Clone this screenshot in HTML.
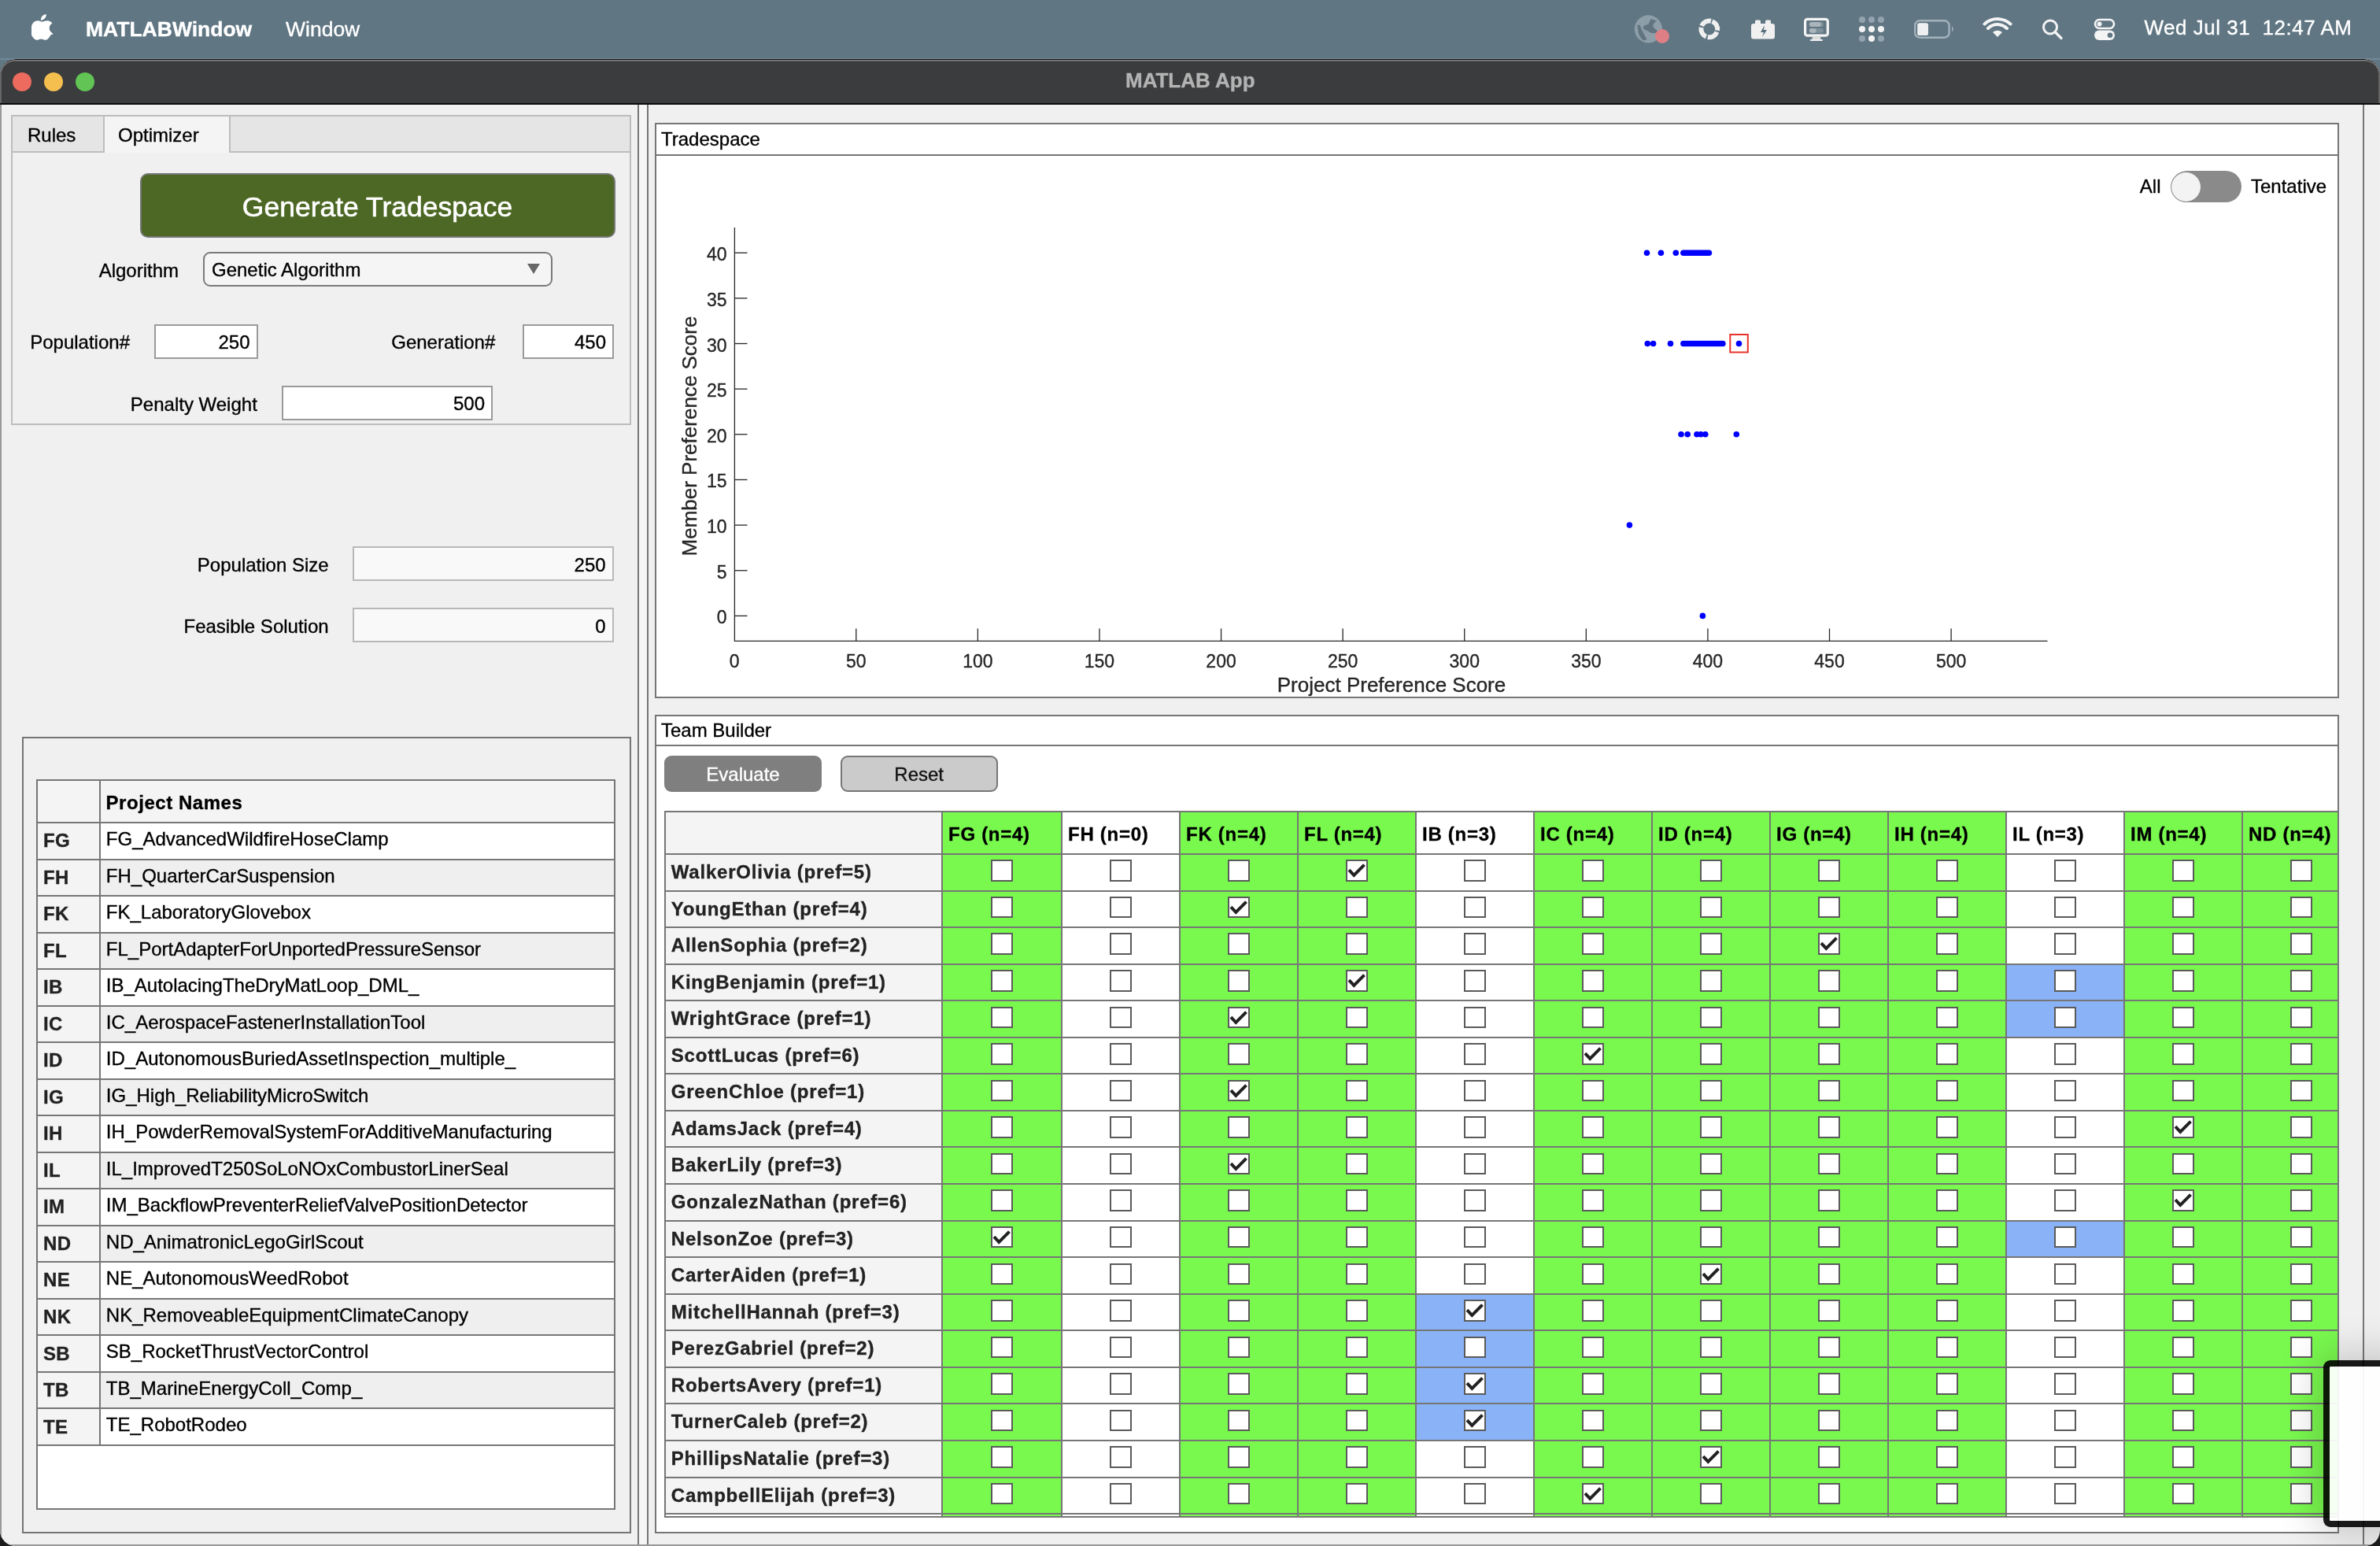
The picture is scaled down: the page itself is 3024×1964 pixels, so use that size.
<!DOCTYPE html>
<html><head><meta charset="utf-8"><title>MATLAB App</title>
<style>
html,body{margin:0;padding:0;}
body{width:3024px;height:1964px;position:relative;overflow:hidden;background:#1c1c1c;font-family:"Liberation Sans", sans-serif;}
#root{position:absolute;left:0;top:0;width:3024px;height:1964px;will-change:transform;}
div{box-sizing:border-box;-webkit-text-stroke:0.35px currentColor;}
</style></head><body>
<div id="root">

<div style="position:absolute;left:0px;top:0px;width:3024px;height:140px;background:#607683;"></div>
<div style="position:absolute;left:0px;top:73.5px;width:3024px;height:2.0px;background:#718998;"></div>
<svg style="position:absolute;left:40px;top:18px" width="28" height="33" viewBox="0 0 170 200">
<path fill="#fff" d="M150.4 155.6c-3 6.9-6.5 13.3-10.6 19.1-5.6 8-10.2 13.5-13.7 16.6-5.5 5-11.4 7.6-17.7 7.8-4.5 0-10-1.3-16.3-3.9-6.4-2.6-12.2-3.9-17.6-3.9-5.6 0-11.7 1.3-18.2 3.9-6.5 2.6-11.8 4-15.7 4.1-6.1.3-12.1-2.4-18.1-8-3.8-3.3-8.6-9-14.3-17-6.1-8.6-11.2-18.6-15.1-29.9C.9 132.3-1.2 120.4-1.2 108.9c0-13.2 2.9-24.6 8.6-34.1 4.5-7.7 10.5-13.8 18-18.2 7.5-4.5 15.6-6.8 24.4-6.9 4.8 0 11 1.5 18.8 4.4 7.8 2.9 12.8 4.4 14.9 4.4 1.6 0 7.2-1.7 16.6-5.2 8.9-3.2 16.5-4.5 22.6-4 16.7 1.3 29.3 7.9 37.7 19.8-15 9.1-22.4 21.8-22.2 38.1.1 12.7 4.7 23.3 13.8 31.7 4.1 3.9 8.7 6.9 13.8 9.1-1.1 3.2-2.3 6.3-3.5 9.3zM113.9 4c0 9.9-3.6 19.2-10.9 27.8-8.7 10.2-19.3 16.1-30.7 15.2-.1-1.2-.2-2.5-.2-3.8 0-9.5 4.1-19.7 11.5-28 3.7-4.2 8.4-7.7 14-10.6C103.2 1.7 108.5.2 113.5-.1c.1 1.4.2 2.7.2 4.1z"/></svg>
<div style="position:absolute;left:109px;top:21.72px;font-size:26.5px;line-height:30.45px;font-weight:700;color:#fff;white-space:pre;">MATLABWindow</div>
<div style="position:absolute;left:363px;top:21.72px;font-size:26.5px;line-height:30.45px;font-weight:400;color:#fff;white-space:pre;">Window</div>
<div style="position:absolute;left:2724.5px;top:21.27px;font-size:26px;line-height:29.87px;font-weight:400;color:#fff;white-space:pre;letter-spacing:0.5px;">Wed Jul 31  12:47 AM</div>
<svg style="position:absolute;left:2070px;top:15px" width="460" height="45" viewBox="2070 15 460 45">
<g>
 <circle cx="2094.4" cy="36.9" r="17.6" fill="#8d9ea8"/>
 <path d="M2080.5 31.6 L2083.9 32.1 Q2085 37 2088.1 41.7 Q2090 46 2092.7 50.1 L2088.1 51.4 Q2083 47 2081.8 41.7 Q2080.5 36 2080.5 31.6 Z" fill="#617581"/>
 <path d="M2097.7 24.1 L2105.3 26.6 Q2101 29 2100.3 32.5 Q2100 34.5 2101.9 35.8 L2106.1 39.2 L2104.5 41.7 Q2100 42.5 2097.7 41.7 Q2094 39 2091.8 38.4 Q2089 37.5 2087.6 35.8 Q2088 33 2089.3 32.5 Q2092 31.5 2094.4 30.8 Q2096 27 2097.7 24.1 Z" fill="#617581"/>
 <circle cx="2112" cy="46" r="9" fill="#de7f85"/>
 <circle cx="2171.8" cy="36.9" r="10.4" fill="none" stroke="#efefef" stroke-width="6" stroke-dasharray="14.23 2.1" transform="rotate(-69 2171.8 36.9)"/>
 <rect x="2225" y="30" width="30" height="19.5" rx="3" fill="#f0f0f0"/>
 <rect x="2230" y="25.5" width="7" height="6" rx="1.5" fill="#f0f0f0"/>
 <rect x="2243" y="25.5" width="7" height="6" rx="1.5" fill="#f0f0f0"/>
 <path d="M2242 32 l-5 9 h4 l-2 6 l6 -9 h-4 z" fill="#5b6f7c"/>
 <rect x="2293.6" y="24.4" width="28.7" height="20.8" rx="2.8" fill="none" stroke="#f4f4f4" stroke-width="3.2"/>
 <rect x="2298.9" y="28" width="18.1" height="5.9" rx="2.95" fill="#7f919b"/>
 <rect x="2298.9" y="28" width="14.8" height="5.9" rx="2.95" fill="#aab5bb"/>
 <rect x="2298.9" y="36" width="18.1" height="5.7" rx="2.85" fill="#7f919b"/>
 <rect x="2298.9" y="36" width="8.8" height="5.7" rx="2.85" fill="#aab5bb"/>
 <rect x="2302.6" y="46.8" width="10.7" height="3.5" fill="#dcdcdc"/>
 <rect x="2299.9" y="50" width="16.1" height="2" rx="0.8" fill="#f0f0f0"/>
 <circle cx="2366" cy="25" r="4" fill="#93a3ad"/><circle cx="2378" cy="25" r="4" fill="#93a3ad"/><circle cx="2390" cy="25" r="4" fill="#93a3ad"/>
 <circle cx="2366" cy="37" r="4" fill="#f4f4f4"/><circle cx="2378" cy="37" r="4" fill="#f4f4f4"/><circle cx="2390" cy="37" r="4" fill="#f4f4f4"/>
 <circle cx="2366" cy="49" r="4" fill="#93a3ad"/><circle cx="2378" cy="49" r="4" fill="#f4f4f4"/><circle cx="2390" cy="49" r="4" fill="#93a3ad"/>
 <rect x="2433.2" y="26.3" width="43.4" height="21.4" rx="6" fill="none" stroke="#a3b2bb" stroke-width="2.4"/>
 <rect x="2436.2" y="29.2" width="13.8" height="15.8" rx="2.6" fill="#eeeff0"/>
 <path d="M2480 33 q3.5 3.9 0 7.8 z" fill="#a3b2bb"/>
</g>
<g fill="none" stroke="#f4f4f4" stroke-linecap="round">
</g>
</svg>
<svg style="position:absolute;left:2515px;top:18px" width="180" height="40" viewBox="2515 18 180 40">
 <path d="M2538 47 l-6 -6 a9 9 0 0 1 12 0 z" fill="#f4f4f4"/>
 <path d="M2526 36 a17 17 0 0 1 24 0" fill="none" stroke="#f4f4f4" stroke-width="4" stroke-linecap="round"/>
 <path d="M2521.5 30.5 a24.5 24.5 0 0 1 33 0" fill="none" stroke="#f4f4f4" stroke-width="4" stroke-linecap="round"/>
 <circle cx="2605" cy="34.5" r="8.5" fill="none" stroke="#f4f4f4" stroke-width="3"/>
 <path d="M2611 40.5 l8 8" stroke="#f4f4f4" stroke-width="3.2" stroke-linecap="round"/>
 <rect x="2662" y="25" width="24" height="11" rx="5.5" fill="none" stroke="#f4f4f4" stroke-width="2.6"/>
 <circle cx="2667.5" cy="30.5" r="3" fill="#f4f4f4"/>
 <rect x="2661" y="38.5" width="26" height="12.5" rx="6.25" fill="#f4f4f4"/>
 <circle cx="2681" cy="44.75" r="3.3" fill="#607683"/>
</svg>
<div style="position:absolute;left:0;top:0;width:3024px;height:1964px;clip-path:inset(75px 0 0 0 round 20px);">
<div style="position:absolute;left:0px;top:75px;width:3024px;height:1889px;background:#f0f0f0;"></div>
<div style="position:absolute;left:0;top:75px;width:3024px;height:58px;background:#3b3c3e;border-radius:20px 20px 0 0;border-top:1.2px solid #0d0d0d;box-shadow:inset 0 1.6px 0 #858585, inset 1.8px 0 0 #6a6a6a, inset -1.8px 0 0 #6a6a6a;"></div>
<div style="position:absolute;left:0px;top:131px;width:3024px;height:2px;background:#0a0a0a;"></div>
<div style="position:absolute;left:0px;top:1962px;width:3024px;height:2px;background:#999;"></div>
<div style="position:absolute;left:16px;top:92px;width:24px;height:24px;border-radius:50%;background:#ec6a5e;"></div>
<div style="position:absolute;left:56px;top:92px;width:24px;height:24px;border-radius:50%;background:#f4bf4f;"></div>
<div style="position:absolute;left:96px;top:92px;width:24px;height:24px;border-radius:50%;background:#61c454;"></div>
<div style="position:absolute;left:512.3px;width:2000px;text-align:center;top:88.47px;font-size:26px;line-height:29.87px;font-weight:700;color:#b3b3b3;white-space:pre;">MATLAB App</div>
<div style="position:absolute;left:0px;top:133px;width:2px;height:1829px;background:#999;"></div>
<div style="position:absolute;left:810px;top:133px;width:2px;height:1829px;background:#767676;"></div>
<div style="position:absolute;left:812px;top:133px;width:10px;height:1829px;background:#f6f6f6;"></div>
<div style="position:absolute;left:822px;top:133px;width:2px;height:1829px;background:#767676;"></div>
<div style="position:absolute;left:3002px;top:133px;width:2px;height:1829px;background:#767676;"></div>
<div style="position:absolute;left:3004px;top:133px;width:18px;height:1829px;background:#efefef;"></div>
<div style="position:absolute;left:14px;top:146px;width:788px;height:394px;border:2px solid #bdbdbd;background:#f0f0f0;"></div>
<div style="position:absolute;left:16px;top:148px;width:784px;height:46px;background:#e5e5e5;border-bottom:2px solid #bdbdbd;"></div>
<div style="position:absolute;left:16px;top:148px;width:117px;height:46px;background:#e5e5e5;border-right:2px solid #bdbdbd;border-bottom:2px solid #bdbdbd;"></div>
<div style="position:absolute;left:133px;top:148px;width:160px;height:46px;background:#f4f4f4;border-right:2px solid #bdbdbd;"></div>
<div style="position:absolute;left:35px;top:157.78px;font-size:24px;line-height:27.58px;font-weight:400;color:#000;white-space:pre;">Rules</div>
<div style="position:absolute;left:150px;top:157.78px;font-size:24px;line-height:27.58px;font-weight:400;color:#000;white-space:pre;">Optimizer</div>
<div style="position:absolute;left:178px;top:220px;width:604px;height:82px;background:#4d6824;border:2px solid #767676;border-radius:10px;"></div>
<div style="position:absolute;left:-520.5px;width:2000px;text-align:center;top:243.37px;font-size:35.5px;line-height:40.79px;font-weight:400;color:#fff;white-space:pre;-webkit-text-stroke:0.6px #fff;">Generate Tradespace</div>
<div style="position:absolute;right:2797px;text-align:right;top:329.68px;font-size:24px;line-height:27.58px;font-weight:400;color:#000;white-space:pre;">Algorithm</div>
<div style="position:absolute;left:258px;top:320px;width:444px;height:44px;background:#f5f5f5;border:2px solid #7a7a7a;border-radius:9px;"></div>
<div style="position:absolute;left:269px;top:328.68px;font-size:24px;line-height:27.58px;font-weight:400;color:#000;white-space:pre;">Genetic Algorithm</div>
<svg style="position:absolute;left:668px;top:333px" width="20" height="17"><path d="M2 2 H18 L10 15 Z" fill="#666"/></svg>
<div style="position:absolute;right:2859px;text-align:right;top:421.48px;font-size:24px;line-height:27.58px;font-weight:400;color:#000;white-space:pre;">Population#</div>
<div style="position:absolute;left:196px;top:412px;width:132px;height:44px;background:#fff;border:2px solid #9a9a9a;"></div>
<div style="position:absolute;right:2706.5px;text-align:right;top:421.08px;font-size:24px;line-height:27.58px;font-weight:400;color:#000;white-space:pre;">250</div>
<div style="position:absolute;right:2394.7px;text-align:right;top:421.48px;font-size:24px;line-height:27.58px;font-weight:400;color:#000;white-space:pre;">Generation#</div>
<div style="position:absolute;left:664px;top:412px;width:116px;height:44px;background:#fff;border:2px solid #9a9a9a;"></div>
<div style="position:absolute;right:2254px;text-align:right;top:420.78px;font-size:24px;line-height:27.58px;font-weight:400;color:#000;white-space:pre;">450</div>
<div style="position:absolute;right:2697.2px;text-align:right;top:500.08px;font-size:24px;line-height:27.58px;font-weight:400;color:#000;white-space:pre;">Penalty Weight</div>
<div style="position:absolute;left:358px;top:490px;width:268px;height:44px;background:#fff;border:2px solid #9a9a9a;"></div>
<div style="position:absolute;right:2408px;text-align:right;top:498.88px;font-size:24px;line-height:27.58px;font-weight:400;color:#000;white-space:pre;">500</div>
<div style="position:absolute;right:2606.4px;text-align:right;top:703.68px;font-size:24px;line-height:27.58px;font-weight:400;color:#000;white-space:pre;">Population Size</div>
<div style="position:absolute;left:448px;top:694px;width:332px;height:44px;background:#f9f9f9;border:2px solid #b8b8b8;"></div>
<div style="position:absolute;right:2254.4px;text-align:right;top:703.88px;font-size:24px;line-height:27.58px;font-weight:400;color:#000;white-space:pre;">250</div>
<div style="position:absolute;right:2606.4px;text-align:right;top:781.58px;font-size:24px;line-height:27.58px;font-weight:400;color:#000;white-space:pre;">Feasible Solution</div>
<div style="position:absolute;left:448px;top:772px;width:332px;height:44px;background:#f9f9f9;border:2px solid #b8b8b8;"></div>
<div style="position:absolute;right:2254.4px;text-align:right;top:782.08px;font-size:24px;line-height:27.58px;font-weight:400;color:#000;white-space:pre;">0</div>
<div style="position:absolute;left:28px;top:936px;width:774px;height:1012px;border:2px solid #747474;background:#f0f0f0;"></div>
<div style="position:absolute;left:46px;top:990px;width:736px;height:928px;border:2px solid #767676;background:#fff;"></div>
<div style="position:absolute;left:48px;top:992px;width:732px;height:53px;background:#f4f4f4;"></div>
<div style="position:absolute;left:48px;top:1044px;width:732px;height:2px;background:#767676;"></div>
<div style="position:absolute;left:134.5px;top:1006.28px;font-size:24px;line-height:27.58px;font-weight:700;color:#000;white-space:pre;letter-spacing:0.55px;">Project Names</div>
<div style="position:absolute;left:48px;top:1046.0px;width:732px;height:44.52999999999997px;background:#ffffff;"></div>
<div style="position:absolute;left:48px;top:1046.0px;width:78px;height:44.52999999999997px;background:#f4f4f4;"></div>
<div style="position:absolute;left:48px;top:1090.53px;width:732px;height:2.0px;background:#767676;"></div>
<div style="position:absolute;left:55px;top:1054.08px;font-size:24px;line-height:27.58px;font-weight:700;color:#222;white-space:pre;letter-spacing:0.3px;">FG</div>
<div style="position:absolute;left:134.8px;top:1051.98px;font-size:24px;line-height:27.58px;font-weight:400;color:#000;white-space:pre;">FG_AdvancedWildfireHoseClamp</div>
<div style="position:absolute;left:48px;top:1092.53px;width:732px;height:44.52999999999997px;background:#efefef;"></div>
<div style="position:absolute;left:48px;top:1092.53px;width:78px;height:44.52999999999997px;background:#f4f4f4;"></div>
<div style="position:absolute;left:48px;top:1137.06px;width:732px;height:2.0px;background:#767676;"></div>
<div style="position:absolute;left:55px;top:1100.61px;font-size:24px;line-height:27.58px;font-weight:700;color:#222;white-space:pre;letter-spacing:0.3px;">FH</div>
<div style="position:absolute;left:134.8px;top:1098.51px;font-size:24px;line-height:27.58px;font-weight:400;color:#000;white-space:pre;">FH_QuarterCarSuspension</div>
<div style="position:absolute;left:48px;top:1139.06px;width:732px;height:44.52999999999997px;background:#ffffff;"></div>
<div style="position:absolute;left:48px;top:1139.06px;width:78px;height:44.52999999999997px;background:#f4f4f4;"></div>
<div style="position:absolute;left:48px;top:1183.59px;width:732px;height:2.0px;background:#767676;"></div>
<div style="position:absolute;left:55px;top:1147.14px;font-size:24px;line-height:27.58px;font-weight:700;color:#222;white-space:pre;letter-spacing:0.3px;">FK</div>
<div style="position:absolute;left:134.8px;top:1145.04px;font-size:24px;line-height:27.58px;font-weight:400;color:#000;white-space:pre;">FK_LaboratoryGlovebox</div>
<div style="position:absolute;left:48px;top:1185.59px;width:732px;height:44.52999999999997px;background:#efefef;"></div>
<div style="position:absolute;left:48px;top:1185.59px;width:78px;height:44.52999999999997px;background:#f4f4f4;"></div>
<div style="position:absolute;left:48px;top:1230.12px;width:732px;height:2.0px;background:#767676;"></div>
<div style="position:absolute;left:55px;top:1193.67px;font-size:24px;line-height:27.58px;font-weight:700;color:#222;white-space:pre;letter-spacing:0.3px;">FL</div>
<div style="position:absolute;left:134.8px;top:1191.57px;font-size:24px;line-height:27.58px;font-weight:400;color:#000;white-space:pre;">FL_PortAdapterForUnportedPressureSensor</div>
<div style="position:absolute;left:48px;top:1232.12px;width:732px;height:44.52999999999997px;background:#ffffff;"></div>
<div style="position:absolute;left:48px;top:1232.12px;width:78px;height:44.52999999999997px;background:#f4f4f4;"></div>
<div style="position:absolute;left:48px;top:1276.6499999999999px;width:732px;height:2.0px;background:#767676;"></div>
<div style="position:absolute;left:55px;top:1240.20px;font-size:24px;line-height:27.58px;font-weight:700;color:#222;white-space:pre;letter-spacing:0.3px;">IB</div>
<div style="position:absolute;left:134.8px;top:1238.10px;font-size:24px;line-height:27.58px;font-weight:400;color:#000;white-space:pre;">IB_AutolacingTheDryMatLoop_DML_</div>
<div style="position:absolute;left:48px;top:1278.65px;width:732px;height:44.52999999999997px;background:#efefef;"></div>
<div style="position:absolute;left:48px;top:1278.65px;width:78px;height:44.52999999999997px;background:#f4f4f4;"></div>
<div style="position:absolute;left:48px;top:1323.18px;width:732px;height:2.0px;background:#767676;"></div>
<div style="position:absolute;left:55px;top:1286.73px;font-size:24px;line-height:27.58px;font-weight:700;color:#222;white-space:pre;letter-spacing:0.3px;">IC</div>
<div style="position:absolute;left:134.8px;top:1284.63px;font-size:24px;line-height:27.58px;font-weight:400;color:#000;white-space:pre;">IC_AerospaceFastenerInstallationTool</div>
<div style="position:absolute;left:48px;top:1325.18px;width:732px;height:44.52999999999997px;background:#ffffff;"></div>
<div style="position:absolute;left:48px;top:1325.18px;width:78px;height:44.52999999999997px;background:#f4f4f4;"></div>
<div style="position:absolute;left:48px;top:1369.71px;width:732px;height:2.0px;background:#767676;"></div>
<div style="position:absolute;left:55px;top:1333.26px;font-size:24px;line-height:27.58px;font-weight:700;color:#222;white-space:pre;letter-spacing:0.3px;">ID</div>
<div style="position:absolute;left:134.8px;top:1331.16px;font-size:24px;line-height:27.58px;font-weight:400;color:#000;white-space:pre;">ID_AutonomousBuriedAssetInspection_multiple_</div>
<div style="position:absolute;left:48px;top:1371.71px;width:732px;height:44.52999999999997px;background:#efefef;"></div>
<div style="position:absolute;left:48px;top:1371.71px;width:78px;height:44.52999999999997px;background:#f4f4f4;"></div>
<div style="position:absolute;left:48px;top:1416.24px;width:732px;height:2.0px;background:#767676;"></div>
<div style="position:absolute;left:55px;top:1379.79px;font-size:24px;line-height:27.58px;font-weight:700;color:#222;white-space:pre;letter-spacing:0.3px;">IG</div>
<div style="position:absolute;left:134.8px;top:1377.69px;font-size:24px;line-height:27.58px;font-weight:400;color:#000;white-space:pre;">IG_High_ReliabilityMicroSwitch</div>
<div style="position:absolute;left:48px;top:1418.24px;width:732px;height:44.52999999999997px;background:#ffffff;"></div>
<div style="position:absolute;left:48px;top:1418.24px;width:78px;height:44.52999999999997px;background:#f4f4f4;"></div>
<div style="position:absolute;left:48px;top:1462.77px;width:732px;height:2.0px;background:#767676;"></div>
<div style="position:absolute;left:55px;top:1426.32px;font-size:24px;line-height:27.58px;font-weight:700;color:#222;white-space:pre;letter-spacing:0.3px;">IH</div>
<div style="position:absolute;left:134.8px;top:1424.22px;font-size:24px;line-height:27.58px;font-weight:400;color:#000;white-space:pre;">IH_PowderRemovalSystemForAdditiveManufacturing</div>
<div style="position:absolute;left:48px;top:1464.77px;width:732px;height:44.52999999999997px;background:#efefef;"></div>
<div style="position:absolute;left:48px;top:1464.77px;width:78px;height:44.52999999999997px;background:#f4f4f4;"></div>
<div style="position:absolute;left:48px;top:1509.3px;width:732px;height:2.0px;background:#767676;"></div>
<div style="position:absolute;left:55px;top:1472.85px;font-size:24px;line-height:27.58px;font-weight:700;color:#222;white-space:pre;letter-spacing:0.3px;">IL</div>
<div style="position:absolute;left:134.8px;top:1470.75px;font-size:24px;line-height:27.58px;font-weight:400;color:#000;white-space:pre;">IL_ImprovedT250SoLoNOxCombustorLinerSeal</div>
<div style="position:absolute;left:48px;top:1511.3px;width:732px;height:44.52999999999997px;background:#ffffff;"></div>
<div style="position:absolute;left:48px;top:1511.3px;width:78px;height:44.52999999999997px;background:#f4f4f4;"></div>
<div style="position:absolute;left:48px;top:1555.83px;width:732px;height:2.0px;background:#767676;"></div>
<div style="position:absolute;left:55px;top:1519.38px;font-size:24px;line-height:27.58px;font-weight:700;color:#222;white-space:pre;letter-spacing:0.3px;">IM</div>
<div style="position:absolute;left:134.8px;top:1517.28px;font-size:24px;line-height:27.58px;font-weight:400;color:#000;white-space:pre;">IM_BackflowPreventerReliefValvePositionDetector</div>
<div style="position:absolute;left:48px;top:1557.83px;width:732px;height:44.52999999999997px;background:#efefef;"></div>
<div style="position:absolute;left:48px;top:1557.83px;width:78px;height:44.52999999999997px;background:#f4f4f4;"></div>
<div style="position:absolute;left:48px;top:1602.36px;width:732px;height:2.0px;background:#767676;"></div>
<div style="position:absolute;left:55px;top:1565.91px;font-size:24px;line-height:27.58px;font-weight:700;color:#222;white-space:pre;letter-spacing:0.3px;">ND</div>
<div style="position:absolute;left:134.8px;top:1563.81px;font-size:24px;line-height:27.58px;font-weight:400;color:#000;white-space:pre;">ND_AnimatronicLegoGirlScout</div>
<div style="position:absolute;left:48px;top:1604.3600000000001px;width:732px;height:44.52999999999997px;background:#ffffff;"></div>
<div style="position:absolute;left:48px;top:1604.3600000000001px;width:78px;height:44.52999999999997px;background:#f4f4f4;"></div>
<div style="position:absolute;left:48px;top:1648.89px;width:732px;height:2.0px;background:#767676;"></div>
<div style="position:absolute;left:55px;top:1612.44px;font-size:24px;line-height:27.58px;font-weight:700;color:#222;white-space:pre;letter-spacing:0.3px;">NE</div>
<div style="position:absolute;left:134.8px;top:1610.34px;font-size:24px;line-height:27.58px;font-weight:400;color:#000;white-space:pre;">NE_AutonomousWeedRobot</div>
<div style="position:absolute;left:48px;top:1650.8899999999999px;width:732px;height:44.52999999999997px;background:#efefef;"></div>
<div style="position:absolute;left:48px;top:1650.8899999999999px;width:78px;height:44.52999999999997px;background:#f4f4f4;"></div>
<div style="position:absolute;left:48px;top:1695.4199999999998px;width:732px;height:2.0px;background:#767676;"></div>
<div style="position:absolute;left:55px;top:1658.97px;font-size:24px;line-height:27.58px;font-weight:700;color:#222;white-space:pre;letter-spacing:0.3px;">NK</div>
<div style="position:absolute;left:134.8px;top:1656.87px;font-size:24px;line-height:27.58px;font-weight:400;color:#000;white-space:pre;">NK_RemoveableEquipmentClimateCanopy</div>
<div style="position:absolute;left:48px;top:1697.42px;width:732px;height:44.52999999999997px;background:#ffffff;"></div>
<div style="position:absolute;left:48px;top:1697.42px;width:78px;height:44.52999999999997px;background:#f4f4f4;"></div>
<div style="position:absolute;left:48px;top:1741.95px;width:732px;height:2.0px;background:#767676;"></div>
<div style="position:absolute;left:55px;top:1705.50px;font-size:24px;line-height:27.58px;font-weight:700;color:#222;white-space:pre;letter-spacing:0.3px;">SB</div>
<div style="position:absolute;left:134.8px;top:1703.40px;font-size:24px;line-height:27.58px;font-weight:400;color:#000;white-space:pre;">SB_RocketThrustVectorControl</div>
<div style="position:absolute;left:48px;top:1743.95px;width:732px;height:44.52999999999997px;background:#efefef;"></div>
<div style="position:absolute;left:48px;top:1743.95px;width:78px;height:44.52999999999997px;background:#f4f4f4;"></div>
<div style="position:absolute;left:48px;top:1788.48px;width:732px;height:2.0px;background:#767676;"></div>
<div style="position:absolute;left:55px;top:1752.03px;font-size:24px;line-height:27.58px;font-weight:700;color:#222;white-space:pre;letter-spacing:0.3px;">TB</div>
<div style="position:absolute;left:134.8px;top:1749.93px;font-size:24px;line-height:27.58px;font-weight:400;color:#000;white-space:pre;">TB_MarineEnergyColl_Comp_</div>
<div style="position:absolute;left:48px;top:1790.48px;width:732px;height:44.52999999999997px;background:#ffffff;"></div>
<div style="position:absolute;left:48px;top:1790.48px;width:78px;height:44.52999999999997px;background:#f4f4f4;"></div>
<div style="position:absolute;left:48px;top:1835.01px;width:732px;height:2.0px;background:#767676;"></div>
<div style="position:absolute;left:55px;top:1798.56px;font-size:24px;line-height:27.58px;font-weight:700;color:#222;white-space:pre;letter-spacing:0.3px;">TE</div>
<div style="position:absolute;left:134.8px;top:1796.46px;font-size:24px;line-height:27.58px;font-weight:400;color:#000;white-space:pre;">TE_RobotRodeo</div>
<div style="position:absolute;left:126px;top:992px;width:2px;height:844.01px;background:#767676;"></div>
<div style="position:absolute;left:832px;top:156px;width:2140px;height:730.5px;border:2px solid #767676;background:#fff;"></div>
<div style="position:absolute;left:834px;top:196px;width:2136px;height:2px;background:#767676;"></div>
<div style="position:absolute;left:840px;top:163.28px;font-size:24px;line-height:27.58px;font-weight:400;color:#000;white-space:pre;">Tradespace</div>
<div style="position:absolute;right:278.5px;text-align:right;top:223.28px;font-size:24px;line-height:27.58px;font-weight:400;color:#000;white-space:pre;">All</div>
<div style="position:absolute;left:2758.5px;top:217px;width:89.5px;height:40px;background:#8a8a8a;border-radius:20px;"></div>
<div style="position:absolute;left:2759px;top:218.5px;width:37px;height:37px;border-radius:50%;background:#f3f3f3;box-shadow:0 0 0 1px #8a8a8a;"></div>
<div style="position:absolute;left:2860px;top:223.28px;font-size:24px;line-height:27.58px;font-weight:400;color:#000;white-space:pre;">Tentative</div>
<svg style="position:absolute;left:0;top:0" width="3024" height="1000" viewBox="0 0 3024 1000"><g stroke="#262626" stroke-width="1.3" fill="none"><path d="M933.4 289 V814.3 H2601.5"/><path d="M933.4 782.40 H949.5"/><path d="M933.4 724.75 H949.5"/><path d="M933.4 667.10 H949.5"/><path d="M933.4 609.45 H949.5"/><path d="M933.4 551.80 H949.5"/><path d="M933.4 494.15 H949.5"/><path d="M933.4 436.50 H949.5"/><path d="M933.4 378.85 H949.5"/><path d="M933.4 321.20 H949.5"/><path d="M1087.79 814.3 V798.5"/><path d="M1242.38 814.3 V798.5"/><path d="M1396.97 814.3 V798.5"/><path d="M1551.56 814.3 V798.5"/><path d="M1706.15 814.3 V798.5"/><path d="M1860.74 814.3 V798.5"/><path d="M2015.33 814.3 V798.5"/><path d="M2169.92 814.3 V798.5"/><path d="M2324.51 814.3 V798.5"/><path d="M2479.10 814.3 V798.5"/></g><g font-family='"Liberation Sans"' font-size="23" fill="#262626" stroke="#262626" stroke-width="0.35"><text x="923.5" y="792.40" text-anchor="end">0</text><text x="923.5" y="734.75" text-anchor="end">5</text><text x="923.5" y="677.10" text-anchor="end">10</text><text x="923.5" y="619.45" text-anchor="end">15</text><text x="923.5" y="561.80" text-anchor="end">20</text><text x="923.5" y="504.15" text-anchor="end">25</text><text x="923.5" y="446.50" text-anchor="end">30</text><text x="923.5" y="388.85" text-anchor="end">35</text><text x="923.5" y="331.20" text-anchor="end">40</text><text x="933.20" y="848" text-anchor="middle">0</text><text x="1087.79" y="848" text-anchor="middle">50</text><text x="1242.38" y="848" text-anchor="middle">100</text><text x="1396.97" y="848" text-anchor="middle">150</text><text x="1551.56" y="848" text-anchor="middle">200</text><text x="1706.15" y="848" text-anchor="middle">250</text><text x="1860.74" y="848" text-anchor="middle">300</text><text x="2015.33" y="848" text-anchor="middle">350</text><text x="2169.92" y="848" text-anchor="middle">400</text><text x="2324.51" y="848" text-anchor="middle">450</text><text x="2479.10" y="848" text-anchor="middle">500</text></g><text x="1768" y="878.8" text-anchor="middle" font-family='"Liberation Sans"' font-size="26" fill="#262626" stroke="#262626" stroke-width="0.35">Project Preference Score</text><text transform="translate(885.2 554) rotate(-90)" x="0" y="0" text-anchor="middle" font-family='"Liberation Sans"' font-size="26" fill="#262626" stroke="#262626" stroke-width="0.35">Member Preference Score</text><g fill="#0000ff"><circle cx="2092.5" cy="321.2" r="3.8"/><circle cx="2110.4" cy="321.2" r="3.8"/><circle cx="2129.3" cy="321.2" r="3.8"/><circle cx="2138.9" cy="321.2" r="3.8"/><circle cx="2141.4" cy="321.2" r="3.8"/><circle cx="2143.9" cy="321.2" r="3.8"/><circle cx="2146.4" cy="321.2" r="3.8"/><circle cx="2148.9" cy="321.2" r="3.8"/><circle cx="2151.4" cy="321.2" r="3.8"/><circle cx="2153.9" cy="321.2" r="3.8"/><circle cx="2156.4" cy="321.2" r="3.8"/><circle cx="2158.9" cy="321.2" r="3.8"/><circle cx="2161.4" cy="321.2" r="3.8"/><circle cx="2163.9" cy="321.2" r="3.8"/><circle cx="2166.4" cy="321.2" r="3.8"/><circle cx="2168.9" cy="321.2" r="3.8"/><circle cx="2171.4" cy="321.2" r="3.8"/><circle cx="2093.3" cy="436.5" r="3.8"/><circle cx="2100.6" cy="436.5" r="3.8"/><circle cx="2122.5" cy="436.5" r="3.8"/><circle cx="2138.9" cy="436.5" r="3.8"/><circle cx="2141.4" cy="436.5" r="3.8"/><circle cx="2143.9" cy="436.5" r="3.8"/><circle cx="2146.4" cy="436.5" r="3.8"/><circle cx="2148.9" cy="436.5" r="3.8"/><circle cx="2151.4" cy="436.5" r="3.8"/><circle cx="2153.9" cy="436.5" r="3.8"/><circle cx="2156.4" cy="436.5" r="3.8"/><circle cx="2158.9" cy="436.5" r="3.8"/><circle cx="2161.4" cy="436.5" r="3.8"/><circle cx="2163.9" cy="436.5" r="3.8"/><circle cx="2166.4" cy="436.5" r="3.8"/><circle cx="2168.9" cy="436.5" r="3.8"/><circle cx="2171.4" cy="436.5" r="3.8"/><circle cx="2173.9" cy="436.5" r="3.8"/><circle cx="2176.4" cy="436.5" r="3.8"/><circle cx="2178.9" cy="436.5" r="3.8"/><circle cx="2181.4" cy="436.5" r="3.8"/><circle cx="2183.9" cy="436.5" r="3.8"/><circle cx="2186.4" cy="436.5" r="3.8"/><circle cx="2188.9" cy="436.5" r="3.8"/><circle cx="2209.5" cy="436.5" r="3.8"/><circle cx="2136.0" cy="551.8" r="3.8"/><circle cx="2144.2" cy="551.8" r="3.8"/><circle cx="2156.0" cy="551.8" r="3.8"/><circle cx="2161.0" cy="551.8" r="3.8"/><circle cx="2166.8" cy="551.8" r="3.8"/><circle cx="2206.3" cy="551.8" r="3.8"/><circle cx="2070.4" cy="667.1" r="3.8"/><circle cx="2163.4" cy="782.4" r="3.8"/></g><rect x="2198.3" y="425" width="22.5" height="22.5" fill="none" stroke="#e8332a" stroke-width="2"/></svg>
<div style="position:absolute;left:832px;top:907.5px;width:2140px;height:1040.0px;border:2px solid #767676;background:#fff;"></div>
<div style="position:absolute;left:834px;top:946px;width:2136px;height:2px;background:#767676;"></div>
<div style="position:absolute;left:840px;top:914.28px;font-size:24px;line-height:27.58px;font-weight:400;color:#000;white-space:pre;">Team Builder</div>
<div style="position:absolute;left:844px;top:960px;width:200px;height:45.5px;background:#7f7f7f;border-radius:9px;"></div>
<div style="position:absolute;left:-56px;width:2000px;text-align:center;top:970.28px;font-size:24px;line-height:27.58px;font-weight:400;color:#fff;white-space:pre;">Evaluate</div>
<div style="position:absolute;left:1068px;top:960px;width:199.5px;height:45.5px;background:#cbcbcb;border:2px solid #767676;border-radius:9px;"></div>
<div style="position:absolute;left:167.70000000000005px;width:2000px;text-align:center;top:970.28px;font-size:24px;line-height:27.58px;font-weight:400;color:#111;white-space:pre;">Reset</div>
<div style="position:absolute;left:834px;top:948px;width:2136px;height:998px;overflow:hidden;">
<div style="position:absolute;left:10px;top:82.5px;width:2157px;height:897.5px;background:#fff;"></div>
<div style="position:absolute;left:12px;top:83.5px;width:351px;height:53.5px;background:#f4f4f4;"></div>
<div style="position:absolute;left:363px;top:83.5px;width:152px;height:895.5px;background:#79f94e;"></div>
<div style="position:absolute;left:371px;top:98.28px;font-size:24px;line-height:27.58px;font-weight:700;color:#000;white-space:pre;letter-spacing:0.72px;">FG (n=4)</div>
<div style="position:absolute;left:515px;top:83.5px;width:150px;height:895.5px;background:#fff;"></div>
<div style="position:absolute;left:523px;top:98.28px;font-size:24px;line-height:27.58px;font-weight:700;color:#000;white-space:pre;letter-spacing:0.72px;">FH (n=0)</div>
<div style="position:absolute;left:665px;top:83.5px;width:150px;height:895.5px;background:#79f94e;"></div>
<div style="position:absolute;left:673px;top:98.28px;font-size:24px;line-height:27.58px;font-weight:700;color:#000;white-space:pre;letter-spacing:0.72px;">FK (n=4)</div>
<div style="position:absolute;left:815px;top:83.5px;width:150px;height:895.5px;background:#79f94e;"></div>
<div style="position:absolute;left:823px;top:98.28px;font-size:24px;line-height:27.58px;font-weight:700;color:#000;white-space:pre;letter-spacing:0.72px;">FL (n=4)</div>
<div style="position:absolute;left:965px;top:83.5px;width:150px;height:895.5px;background:#fff;"></div>
<div style="position:absolute;left:973px;top:98.28px;font-size:24px;line-height:27.58px;font-weight:700;color:#000;white-space:pre;letter-spacing:0.72px;">IB (n=3)</div>
<div style="position:absolute;left:1115px;top:83.5px;width:150px;height:895.5px;background:#79f94e;"></div>
<div style="position:absolute;left:1123px;top:98.28px;font-size:24px;line-height:27.58px;font-weight:700;color:#000;white-space:pre;letter-spacing:0.72px;">IC (n=4)</div>
<div style="position:absolute;left:1265px;top:83.5px;width:150px;height:895.5px;background:#79f94e;"></div>
<div style="position:absolute;left:1273px;top:98.28px;font-size:24px;line-height:27.58px;font-weight:700;color:#000;white-space:pre;letter-spacing:0.72px;">ID (n=4)</div>
<div style="position:absolute;left:1415px;top:83.5px;width:150px;height:895.5px;background:#79f94e;"></div>
<div style="position:absolute;left:1423px;top:98.28px;font-size:24px;line-height:27.58px;font-weight:700;color:#000;white-space:pre;letter-spacing:0.72px;">IG (n=4)</div>
<div style="position:absolute;left:1565px;top:83.5px;width:150px;height:895.5px;background:#79f94e;"></div>
<div style="position:absolute;left:1573px;top:98.28px;font-size:24px;line-height:27.58px;font-weight:700;color:#000;white-space:pre;letter-spacing:0.72px;">IH (n=4)</div>
<div style="position:absolute;left:1715px;top:83.5px;width:150px;height:895.5px;background:#fff;"></div>
<div style="position:absolute;left:1723px;top:98.28px;font-size:24px;line-height:27.58px;font-weight:700;color:#000;white-space:pre;letter-spacing:0.72px;">IL (n=3)</div>
<div style="position:absolute;left:1865px;top:83.5px;width:150px;height:895.5px;background:#79f94e;"></div>
<div style="position:absolute;left:1873px;top:98.28px;font-size:24px;line-height:27.58px;font-weight:700;color:#000;white-space:pre;letter-spacing:0.72px;">IM (n=4)</div>
<div style="position:absolute;left:2015px;top:83.5px;width:150px;height:895.5px;background:#79f94e;"></div>
<div style="position:absolute;left:2023px;top:98.28px;font-size:24px;line-height:27.58px;font-weight:700;color:#000;white-space:pre;letter-spacing:0.72px;">ND (n=4)</div>
<div style="position:absolute;left:12px;top:137px;width:351px;height:838.0799999999999px;background:#f4f4f4;"></div>
<div style="position:absolute;left:965px;top:695.72px;width:150px;height:46.559999999999945px;background:#8ab2f7;"></div>
<div style="position:absolute;left:965px;top:742.28px;width:150px;height:46.56000000000017px;background:#8ab2f7;"></div>
<div style="position:absolute;left:1715px;top:276.68000000000006px;width:150px;height:46.559999999999945px;background:#8ab2f7;"></div>
<div style="position:absolute;left:965px;top:788.8400000000001px;width:150px;height:46.559999999999945px;background:#8ab2f7;"></div>
<div style="position:absolute;left:1715px;top:602.5999999999999px;width:150px;height:46.56000000000017px;background:#8ab2f7;"></div>
<div style="position:absolute;left:1715px;top:323.24px;width:150px;height:46.559999999999945px;background:#8ab2f7;"></div>
<div style="position:absolute;left:965px;top:835.4000000000001px;width:150px;height:46.559999999999945px;background:#8ab2f7;"></div>
<div style="position:absolute;left:10px;top:81.5px;width:2157px;height:2.0px;background:#767676;"></div>
<div style="position:absolute;left:10px;top:136.0px;width:2157px;height:2.0px;background:#767676;"></div>
<div style="position:absolute;left:10px;top:182.55999999999995px;width:2157px;height:2.0px;background:#767676;"></div>
<div style="position:absolute;left:10px;top:229.1199999999999px;width:2157px;height:2.0px;background:#767676;"></div>
<div style="position:absolute;left:10px;top:275.68000000000006px;width:2157px;height:2.0px;background:#767676;"></div>
<div style="position:absolute;left:10px;top:322.24px;width:2157px;height:2.0px;background:#767676;"></div>
<div style="position:absolute;left:10px;top:368.79999999999995px;width:2157px;height:2.0px;background:#767676;"></div>
<div style="position:absolute;left:10px;top:415.3600000000001px;width:2157px;height:2.0px;background:#767676;"></div>
<div style="position:absolute;left:10px;top:461.9200000000001px;width:2157px;height:2.0px;background:#767676;"></div>
<div style="position:absolute;left:10px;top:508.48px;width:2157px;height:2.0px;background:#767676;"></div>
<div style="position:absolute;left:10px;top:555.04px;width:2157px;height:2.0px;background:#767676;"></div>
<div style="position:absolute;left:10px;top:601.5999999999999px;width:2157px;height:2.0px;background:#767676;"></div>
<div style="position:absolute;left:10px;top:648.1600000000001px;width:2157px;height:2.0px;background:#767676;"></div>
<div style="position:absolute;left:10px;top:694.72px;width:2157px;height:2.0px;background:#767676;"></div>
<div style="position:absolute;left:10px;top:741.28px;width:2157px;height:2.0px;background:#767676;"></div>
<div style="position:absolute;left:10px;top:787.8400000000001px;width:2157px;height:2.0px;background:#767676;"></div>
<div style="position:absolute;left:10px;top:834.4000000000001px;width:2157px;height:2.0px;background:#767676;"></div>
<div style="position:absolute;left:10px;top:880.96px;width:2157px;height:2.0px;background:#767676;"></div>
<div style="position:absolute;left:10px;top:927.52px;width:2157px;height:2.0px;background:#767676;"></div>
<div style="position:absolute;left:10px;top:974.0799999999999px;width:2157px;height:2.0px;background:#767676;"></div>
<div style="position:absolute;left:10px;top:978px;width:2157px;height:2px;background:#767676;"></div>
<div style="position:absolute;left:10px;top:82.5px;width:2px;height:897.5px;background:#767676;"></div>
<div style="position:absolute;left:362px;top:82.5px;width:2px;height:897.5px;background:#767676;"></div>
<div style="position:absolute;left:514px;top:82.5px;width:2px;height:897.5px;background:#767676;"></div>
<div style="position:absolute;left:664px;top:82.5px;width:2px;height:897.5px;background:#767676;"></div>
<div style="position:absolute;left:814px;top:82.5px;width:2px;height:897.5px;background:#767676;"></div>
<div style="position:absolute;left:964px;top:82.5px;width:2px;height:897.5px;background:#767676;"></div>
<div style="position:absolute;left:1114px;top:82.5px;width:2px;height:897.5px;background:#767676;"></div>
<div style="position:absolute;left:1264px;top:82.5px;width:2px;height:897.5px;background:#767676;"></div>
<div style="position:absolute;left:1414px;top:82.5px;width:2px;height:897.5px;background:#767676;"></div>
<div style="position:absolute;left:1564px;top:82.5px;width:2px;height:897.5px;background:#767676;"></div>
<div style="position:absolute;left:1714px;top:82.5px;width:2px;height:897.5px;background:#767676;"></div>
<div style="position:absolute;left:1864px;top:82.5px;width:2px;height:897.5px;background:#767676;"></div>
<div style="position:absolute;left:2014px;top:82.5px;width:2px;height:897.5px;background:#767676;"></div>
<div style="position:absolute;left:2164px;top:82.5px;width:2px;height:897.5px;background:#767676;"></div>
<div style="position:absolute;left:18.799999999999955px;top:145.98px;font-size:24px;line-height:27.58px;font-weight:700;color:#222;white-space:pre;letter-spacing:0.78px;">WalkerOlivia (pref=5)</div>
<div style="position:absolute;left:18.799999999999955px;top:192.54px;font-size:24px;line-height:27.58px;font-weight:700;color:#222;white-space:pre;letter-spacing:0.78px;">YoungEthan (pref=4)</div>
<div style="position:absolute;left:18.799999999999955px;top:239.10px;font-size:24px;line-height:27.58px;font-weight:700;color:#222;white-space:pre;letter-spacing:0.78px;">AllenSophia (pref=2)</div>
<div style="position:absolute;left:18.799999999999955px;top:285.66px;font-size:24px;line-height:27.58px;font-weight:700;color:#222;white-space:pre;letter-spacing:0.78px;">KingBenjamin (pref=1)</div>
<div style="position:absolute;left:18.799999999999955px;top:332.22px;font-size:24px;line-height:27.58px;font-weight:700;color:#222;white-space:pre;letter-spacing:0.78px;">WrightGrace (pref=1)</div>
<div style="position:absolute;left:18.799999999999955px;top:378.78px;font-size:24px;line-height:27.58px;font-weight:700;color:#222;white-space:pre;letter-spacing:0.78px;">ScottLucas (pref=6)</div>
<div style="position:absolute;left:18.799999999999955px;top:425.34px;font-size:24px;line-height:27.58px;font-weight:700;color:#222;white-space:pre;letter-spacing:0.78px;">GreenChloe (pref=1)</div>
<div style="position:absolute;left:18.799999999999955px;top:471.90px;font-size:24px;line-height:27.58px;font-weight:700;color:#222;white-space:pre;letter-spacing:0.78px;">AdamsJack (pref=4)</div>
<div style="position:absolute;left:18.799999999999955px;top:518.46px;font-size:24px;line-height:27.58px;font-weight:700;color:#222;white-space:pre;letter-spacing:0.78px;">BakerLily (pref=3)</div>
<div style="position:absolute;left:18.799999999999955px;top:565.02px;font-size:24px;line-height:27.58px;font-weight:700;color:#222;white-space:pre;letter-spacing:0.78px;">GonzalezNathan (pref=6)</div>
<div style="position:absolute;left:18.799999999999955px;top:611.58px;font-size:24px;line-height:27.58px;font-weight:700;color:#222;white-space:pre;letter-spacing:0.78px;">NelsonZoe (pref=3)</div>
<div style="position:absolute;left:18.799999999999955px;top:658.14px;font-size:24px;line-height:27.58px;font-weight:700;color:#222;white-space:pre;letter-spacing:0.78px;">CarterAiden (pref=1)</div>
<div style="position:absolute;left:18.799999999999955px;top:704.70px;font-size:24px;line-height:27.58px;font-weight:700;color:#222;white-space:pre;letter-spacing:0.78px;">MitchellHannah (pref=3)</div>
<div style="position:absolute;left:18.799999999999955px;top:751.26px;font-size:24px;line-height:27.58px;font-weight:700;color:#222;white-space:pre;letter-spacing:0.78px;">PerezGabriel (pref=2)</div>
<div style="position:absolute;left:18.799999999999955px;top:797.82px;font-size:24px;line-height:27.58px;font-weight:700;color:#222;white-space:pre;letter-spacing:0.78px;">RobertsAvery (pref=1)</div>
<div style="position:absolute;left:18.799999999999955px;top:844.38px;font-size:24px;line-height:27.58px;font-weight:700;color:#222;white-space:pre;letter-spacing:0.78px;">TurnerCaleb (pref=2)</div>
<div style="position:absolute;left:18.799999999999955px;top:890.94px;font-size:24px;line-height:27.58px;font-weight:700;color:#222;white-space:pre;letter-spacing:0.78px;">PhillipsNatalie (pref=3)</div>
<div style="position:absolute;left:18.799999999999955px;top:937.50px;font-size:24px;line-height:27.58px;font-weight:700;color:#222;white-space:pre;letter-spacing:0.78px;">CampbellElijah (pref=3)</div>
<div style="position:absolute;left:425.2px;top:144.3px;width:27.6px;height:27.6px;border:2px solid #5a5a5a;background:#fff;"></div>
<div style="position:absolute;left:576.2px;top:144.3px;width:27.6px;height:27.6px;border:2px solid #5a5a5a;background:#fff;"></div>
<div style="position:absolute;left:726.2px;top:144.3px;width:27.6px;height:27.6px;border:2px solid #5a5a5a;background:#fff;"></div>
<div style="position:absolute;left:876.2px;top:144.3px;width:27.6px;height:27.6px;border:2px solid #5a5a5a;background:#fff;"><svg width="24" height="24" style="position:absolute;left:0;top:0"><path d="M2 11.2 L8.3 17.8 L21.5 4.6" fill="none" stroke="#222" stroke-width="4"/></svg></div>
<div style="position:absolute;left:1026.2px;top:144.3px;width:27.6px;height:27.6px;border:2px solid #5a5a5a;background:#fff;"></div>
<div style="position:absolute;left:1176.2px;top:144.3px;width:27.6px;height:27.6px;border:2px solid #5a5a5a;background:#fff;"></div>
<div style="position:absolute;left:1326.2px;top:144.3px;width:27.6px;height:27.6px;border:2px solid #5a5a5a;background:#fff;"></div>
<div style="position:absolute;left:1476.2px;top:144.3px;width:27.6px;height:27.6px;border:2px solid #5a5a5a;background:#fff;"></div>
<div style="position:absolute;left:1626.2px;top:144.3px;width:27.6px;height:27.6px;border:2px solid #5a5a5a;background:#fff;"></div>
<div style="position:absolute;left:1776.2px;top:144.3px;width:27.6px;height:27.6px;border:2px solid #5a5a5a;background:#fff;"></div>
<div style="position:absolute;left:1926.2px;top:144.3px;width:27.6px;height:27.6px;border:2px solid #5a5a5a;background:#fff;"></div>
<div style="position:absolute;left:2076.2px;top:144.3px;width:27.6px;height:27.6px;border:2px solid #5a5a5a;background:#fff;"></div>
<div style="position:absolute;left:425.2px;top:190.9px;width:27.6px;height:27.6px;border:2px solid #5a5a5a;background:#fff;"></div>
<div style="position:absolute;left:576.2px;top:190.9px;width:27.6px;height:27.6px;border:2px solid #5a5a5a;background:#fff;"></div>
<div style="position:absolute;left:726.2px;top:190.9px;width:27.6px;height:27.6px;border:2px solid #5a5a5a;background:#fff;"><svg width="24" height="24" style="position:absolute;left:0;top:0"><path d="M2 11.2 L8.3 17.8 L21.5 4.6" fill="none" stroke="#222" stroke-width="4"/></svg></div>
<div style="position:absolute;left:876.2px;top:190.9px;width:27.6px;height:27.6px;border:2px solid #5a5a5a;background:#fff;"></div>
<div style="position:absolute;left:1026.2px;top:190.9px;width:27.6px;height:27.6px;border:2px solid #5a5a5a;background:#fff;"></div>
<div style="position:absolute;left:1176.2px;top:190.9px;width:27.6px;height:27.6px;border:2px solid #5a5a5a;background:#fff;"></div>
<div style="position:absolute;left:1326.2px;top:190.9px;width:27.6px;height:27.6px;border:2px solid #5a5a5a;background:#fff;"></div>
<div style="position:absolute;left:1476.2px;top:190.9px;width:27.6px;height:27.6px;border:2px solid #5a5a5a;background:#fff;"></div>
<div style="position:absolute;left:1626.2px;top:190.9px;width:27.6px;height:27.6px;border:2px solid #5a5a5a;background:#fff;"></div>
<div style="position:absolute;left:1776.2px;top:190.9px;width:27.6px;height:27.6px;border:2px solid #5a5a5a;background:#fff;"></div>
<div style="position:absolute;left:1926.2px;top:190.9px;width:27.6px;height:27.6px;border:2px solid #5a5a5a;background:#fff;"></div>
<div style="position:absolute;left:2076.2px;top:190.9px;width:27.6px;height:27.6px;border:2px solid #5a5a5a;background:#fff;"></div>
<div style="position:absolute;left:425.2px;top:237.4px;width:27.6px;height:27.6px;border:2px solid #5a5a5a;background:#fff;"></div>
<div style="position:absolute;left:576.2px;top:237.4px;width:27.6px;height:27.6px;border:2px solid #5a5a5a;background:#fff;"></div>
<div style="position:absolute;left:726.2px;top:237.4px;width:27.6px;height:27.6px;border:2px solid #5a5a5a;background:#fff;"></div>
<div style="position:absolute;left:876.2px;top:237.4px;width:27.6px;height:27.6px;border:2px solid #5a5a5a;background:#fff;"></div>
<div style="position:absolute;left:1026.2px;top:237.4px;width:27.6px;height:27.6px;border:2px solid #5a5a5a;background:#fff;"></div>
<div style="position:absolute;left:1176.2px;top:237.4px;width:27.6px;height:27.6px;border:2px solid #5a5a5a;background:#fff;"></div>
<div style="position:absolute;left:1326.2px;top:237.4px;width:27.6px;height:27.6px;border:2px solid #5a5a5a;background:#fff;"></div>
<div style="position:absolute;left:1476.2px;top:237.4px;width:27.6px;height:27.6px;border:2px solid #5a5a5a;background:#fff;"><svg width="24" height="24" style="position:absolute;left:0;top:0"><path d="M2 11.2 L8.3 17.8 L21.5 4.6" fill="none" stroke="#222" stroke-width="4"/></svg></div>
<div style="position:absolute;left:1626.2px;top:237.4px;width:27.6px;height:27.6px;border:2px solid #5a5a5a;background:#fff;"></div>
<div style="position:absolute;left:1776.2px;top:237.4px;width:27.6px;height:27.6px;border:2px solid #5a5a5a;background:#fff;"></div>
<div style="position:absolute;left:1926.2px;top:237.4px;width:27.6px;height:27.6px;border:2px solid #5a5a5a;background:#fff;"></div>
<div style="position:absolute;left:2076.2px;top:237.4px;width:27.6px;height:27.6px;border:2px solid #5a5a5a;background:#fff;"></div>
<div style="position:absolute;left:425.2px;top:284.0px;width:27.6px;height:27.6px;border:2px solid #5a5a5a;background:#fff;"></div>
<div style="position:absolute;left:576.2px;top:284.0px;width:27.6px;height:27.6px;border:2px solid #5a5a5a;background:#fff;"></div>
<div style="position:absolute;left:726.2px;top:284.0px;width:27.6px;height:27.6px;border:2px solid #5a5a5a;background:#fff;"></div>
<div style="position:absolute;left:876.2px;top:284.0px;width:27.6px;height:27.6px;border:2px solid #5a5a5a;background:#fff;"><svg width="24" height="24" style="position:absolute;left:0;top:0"><path d="M2 11.2 L8.3 17.8 L21.5 4.6" fill="none" stroke="#222" stroke-width="4"/></svg></div>
<div style="position:absolute;left:1026.2px;top:284.0px;width:27.6px;height:27.6px;border:2px solid #5a5a5a;background:#fff;"></div>
<div style="position:absolute;left:1176.2px;top:284.0px;width:27.6px;height:27.6px;border:2px solid #5a5a5a;background:#fff;"></div>
<div style="position:absolute;left:1326.2px;top:284.0px;width:27.6px;height:27.6px;border:2px solid #5a5a5a;background:#fff;"></div>
<div style="position:absolute;left:1476.2px;top:284.0px;width:27.6px;height:27.6px;border:2px solid #5a5a5a;background:#fff;"></div>
<div style="position:absolute;left:1626.2px;top:284.0px;width:27.6px;height:27.6px;border:2px solid #5a5a5a;background:#fff;"></div>
<div style="position:absolute;left:1776.2px;top:284.0px;width:27.6px;height:27.6px;border:2px solid #5a5a5a;background:#fff;"></div>
<div style="position:absolute;left:1926.2px;top:284.0px;width:27.6px;height:27.6px;border:2px solid #5a5a5a;background:#fff;"></div>
<div style="position:absolute;left:2076.2px;top:284.0px;width:27.6px;height:27.6px;border:2px solid #5a5a5a;background:#fff;"></div>
<div style="position:absolute;left:425.2px;top:330.5px;width:27.6px;height:27.6px;border:2px solid #5a5a5a;background:#fff;"></div>
<div style="position:absolute;left:576.2px;top:330.5px;width:27.6px;height:27.6px;border:2px solid #5a5a5a;background:#fff;"></div>
<div style="position:absolute;left:726.2px;top:330.5px;width:27.6px;height:27.6px;border:2px solid #5a5a5a;background:#fff;"><svg width="24" height="24" style="position:absolute;left:0;top:0"><path d="M2 11.2 L8.3 17.8 L21.5 4.6" fill="none" stroke="#222" stroke-width="4"/></svg></div>
<div style="position:absolute;left:876.2px;top:330.5px;width:27.6px;height:27.6px;border:2px solid #5a5a5a;background:#fff;"></div>
<div style="position:absolute;left:1026.2px;top:330.5px;width:27.6px;height:27.6px;border:2px solid #5a5a5a;background:#fff;"></div>
<div style="position:absolute;left:1176.2px;top:330.5px;width:27.6px;height:27.6px;border:2px solid #5a5a5a;background:#fff;"></div>
<div style="position:absolute;left:1326.2px;top:330.5px;width:27.6px;height:27.6px;border:2px solid #5a5a5a;background:#fff;"></div>
<div style="position:absolute;left:1476.2px;top:330.5px;width:27.6px;height:27.6px;border:2px solid #5a5a5a;background:#fff;"></div>
<div style="position:absolute;left:1626.2px;top:330.5px;width:27.6px;height:27.6px;border:2px solid #5a5a5a;background:#fff;"></div>
<div style="position:absolute;left:1776.2px;top:330.5px;width:27.6px;height:27.6px;border:2px solid #5a5a5a;background:#fff;"></div>
<div style="position:absolute;left:1926.2px;top:330.5px;width:27.6px;height:27.6px;border:2px solid #5a5a5a;background:#fff;"></div>
<div style="position:absolute;left:2076.2px;top:330.5px;width:27.6px;height:27.6px;border:2px solid #5a5a5a;background:#fff;"></div>
<div style="position:absolute;left:425.2px;top:377.1px;width:27.6px;height:27.6px;border:2px solid #5a5a5a;background:#fff;"></div>
<div style="position:absolute;left:576.2px;top:377.1px;width:27.6px;height:27.6px;border:2px solid #5a5a5a;background:#fff;"></div>
<div style="position:absolute;left:726.2px;top:377.1px;width:27.6px;height:27.6px;border:2px solid #5a5a5a;background:#fff;"></div>
<div style="position:absolute;left:876.2px;top:377.1px;width:27.6px;height:27.6px;border:2px solid #5a5a5a;background:#fff;"></div>
<div style="position:absolute;left:1026.2px;top:377.1px;width:27.6px;height:27.6px;border:2px solid #5a5a5a;background:#fff;"></div>
<div style="position:absolute;left:1176.2px;top:377.1px;width:27.6px;height:27.6px;border:2px solid #5a5a5a;background:#fff;"><svg width="24" height="24" style="position:absolute;left:0;top:0"><path d="M2 11.2 L8.3 17.8 L21.5 4.6" fill="none" stroke="#222" stroke-width="4"/></svg></div>
<div style="position:absolute;left:1326.2px;top:377.1px;width:27.6px;height:27.6px;border:2px solid #5a5a5a;background:#fff;"></div>
<div style="position:absolute;left:1476.2px;top:377.1px;width:27.6px;height:27.6px;border:2px solid #5a5a5a;background:#fff;"></div>
<div style="position:absolute;left:1626.2px;top:377.1px;width:27.6px;height:27.6px;border:2px solid #5a5a5a;background:#fff;"></div>
<div style="position:absolute;left:1776.2px;top:377.1px;width:27.6px;height:27.6px;border:2px solid #5a5a5a;background:#fff;"></div>
<div style="position:absolute;left:1926.2px;top:377.1px;width:27.6px;height:27.6px;border:2px solid #5a5a5a;background:#fff;"></div>
<div style="position:absolute;left:2076.2px;top:377.1px;width:27.6px;height:27.6px;border:2px solid #5a5a5a;background:#fff;"></div>
<div style="position:absolute;left:425.2px;top:423.7px;width:27.6px;height:27.6px;border:2px solid #5a5a5a;background:#fff;"></div>
<div style="position:absolute;left:576.2px;top:423.7px;width:27.6px;height:27.6px;border:2px solid #5a5a5a;background:#fff;"></div>
<div style="position:absolute;left:726.2px;top:423.7px;width:27.6px;height:27.6px;border:2px solid #5a5a5a;background:#fff;"><svg width="24" height="24" style="position:absolute;left:0;top:0"><path d="M2 11.2 L8.3 17.8 L21.5 4.6" fill="none" stroke="#222" stroke-width="4"/></svg></div>
<div style="position:absolute;left:876.2px;top:423.7px;width:27.6px;height:27.6px;border:2px solid #5a5a5a;background:#fff;"></div>
<div style="position:absolute;left:1026.2px;top:423.7px;width:27.6px;height:27.6px;border:2px solid #5a5a5a;background:#fff;"></div>
<div style="position:absolute;left:1176.2px;top:423.7px;width:27.6px;height:27.6px;border:2px solid #5a5a5a;background:#fff;"></div>
<div style="position:absolute;left:1326.2px;top:423.7px;width:27.6px;height:27.6px;border:2px solid #5a5a5a;background:#fff;"></div>
<div style="position:absolute;left:1476.2px;top:423.7px;width:27.6px;height:27.6px;border:2px solid #5a5a5a;background:#fff;"></div>
<div style="position:absolute;left:1626.2px;top:423.7px;width:27.6px;height:27.6px;border:2px solid #5a5a5a;background:#fff;"></div>
<div style="position:absolute;left:1776.2px;top:423.7px;width:27.6px;height:27.6px;border:2px solid #5a5a5a;background:#fff;"></div>
<div style="position:absolute;left:1926.2px;top:423.7px;width:27.6px;height:27.6px;border:2px solid #5a5a5a;background:#fff;"></div>
<div style="position:absolute;left:2076.2px;top:423.7px;width:27.6px;height:27.6px;border:2px solid #5a5a5a;background:#fff;"></div>
<div style="position:absolute;left:425.2px;top:470.2px;width:27.6px;height:27.6px;border:2px solid #5a5a5a;background:#fff;"></div>
<div style="position:absolute;left:576.2px;top:470.2px;width:27.6px;height:27.6px;border:2px solid #5a5a5a;background:#fff;"></div>
<div style="position:absolute;left:726.2px;top:470.2px;width:27.6px;height:27.6px;border:2px solid #5a5a5a;background:#fff;"></div>
<div style="position:absolute;left:876.2px;top:470.2px;width:27.6px;height:27.6px;border:2px solid #5a5a5a;background:#fff;"></div>
<div style="position:absolute;left:1026.2px;top:470.2px;width:27.6px;height:27.6px;border:2px solid #5a5a5a;background:#fff;"></div>
<div style="position:absolute;left:1176.2px;top:470.2px;width:27.6px;height:27.6px;border:2px solid #5a5a5a;background:#fff;"></div>
<div style="position:absolute;left:1326.2px;top:470.2px;width:27.6px;height:27.6px;border:2px solid #5a5a5a;background:#fff;"></div>
<div style="position:absolute;left:1476.2px;top:470.2px;width:27.6px;height:27.6px;border:2px solid #5a5a5a;background:#fff;"></div>
<div style="position:absolute;left:1626.2px;top:470.2px;width:27.6px;height:27.6px;border:2px solid #5a5a5a;background:#fff;"></div>
<div style="position:absolute;left:1776.2px;top:470.2px;width:27.6px;height:27.6px;border:2px solid #5a5a5a;background:#fff;"></div>
<div style="position:absolute;left:1926.2px;top:470.2px;width:27.6px;height:27.6px;border:2px solid #5a5a5a;background:#fff;"><svg width="24" height="24" style="position:absolute;left:0;top:0"><path d="M2 11.2 L8.3 17.8 L21.5 4.6" fill="none" stroke="#222" stroke-width="4"/></svg></div>
<div style="position:absolute;left:2076.2px;top:470.2px;width:27.6px;height:27.6px;border:2px solid #5a5a5a;background:#fff;"></div>
<div style="position:absolute;left:425.2px;top:516.8px;width:27.6px;height:27.6px;border:2px solid #5a5a5a;background:#fff;"></div>
<div style="position:absolute;left:576.2px;top:516.8px;width:27.6px;height:27.6px;border:2px solid #5a5a5a;background:#fff;"></div>
<div style="position:absolute;left:726.2px;top:516.8px;width:27.6px;height:27.6px;border:2px solid #5a5a5a;background:#fff;"><svg width="24" height="24" style="position:absolute;left:0;top:0"><path d="M2 11.2 L8.3 17.8 L21.5 4.6" fill="none" stroke="#222" stroke-width="4"/></svg></div>
<div style="position:absolute;left:876.2px;top:516.8px;width:27.6px;height:27.6px;border:2px solid #5a5a5a;background:#fff;"></div>
<div style="position:absolute;left:1026.2px;top:516.8px;width:27.6px;height:27.6px;border:2px solid #5a5a5a;background:#fff;"></div>
<div style="position:absolute;left:1176.2px;top:516.8px;width:27.6px;height:27.6px;border:2px solid #5a5a5a;background:#fff;"></div>
<div style="position:absolute;left:1326.2px;top:516.8px;width:27.6px;height:27.6px;border:2px solid #5a5a5a;background:#fff;"></div>
<div style="position:absolute;left:1476.2px;top:516.8px;width:27.6px;height:27.6px;border:2px solid #5a5a5a;background:#fff;"></div>
<div style="position:absolute;left:1626.2px;top:516.8px;width:27.6px;height:27.6px;border:2px solid #5a5a5a;background:#fff;"></div>
<div style="position:absolute;left:1776.2px;top:516.8px;width:27.6px;height:27.6px;border:2px solid #5a5a5a;background:#fff;"></div>
<div style="position:absolute;left:1926.2px;top:516.8px;width:27.6px;height:27.6px;border:2px solid #5a5a5a;background:#fff;"></div>
<div style="position:absolute;left:2076.2px;top:516.8px;width:27.6px;height:27.6px;border:2px solid #5a5a5a;background:#fff;"></div>
<div style="position:absolute;left:425.2px;top:563.3px;width:27.6px;height:27.6px;border:2px solid #5a5a5a;background:#fff;"></div>
<div style="position:absolute;left:576.2px;top:563.3px;width:27.6px;height:27.6px;border:2px solid #5a5a5a;background:#fff;"></div>
<div style="position:absolute;left:726.2px;top:563.3px;width:27.6px;height:27.6px;border:2px solid #5a5a5a;background:#fff;"></div>
<div style="position:absolute;left:876.2px;top:563.3px;width:27.6px;height:27.6px;border:2px solid #5a5a5a;background:#fff;"></div>
<div style="position:absolute;left:1026.2px;top:563.3px;width:27.6px;height:27.6px;border:2px solid #5a5a5a;background:#fff;"></div>
<div style="position:absolute;left:1176.2px;top:563.3px;width:27.6px;height:27.6px;border:2px solid #5a5a5a;background:#fff;"></div>
<div style="position:absolute;left:1326.2px;top:563.3px;width:27.6px;height:27.6px;border:2px solid #5a5a5a;background:#fff;"></div>
<div style="position:absolute;left:1476.2px;top:563.3px;width:27.6px;height:27.6px;border:2px solid #5a5a5a;background:#fff;"></div>
<div style="position:absolute;left:1626.2px;top:563.3px;width:27.6px;height:27.6px;border:2px solid #5a5a5a;background:#fff;"></div>
<div style="position:absolute;left:1776.2px;top:563.3px;width:27.6px;height:27.6px;border:2px solid #5a5a5a;background:#fff;"></div>
<div style="position:absolute;left:1926.2px;top:563.3px;width:27.6px;height:27.6px;border:2px solid #5a5a5a;background:#fff;"><svg width="24" height="24" style="position:absolute;left:0;top:0"><path d="M2 11.2 L8.3 17.8 L21.5 4.6" fill="none" stroke="#222" stroke-width="4"/></svg></div>
<div style="position:absolute;left:2076.2px;top:563.3px;width:27.6px;height:27.6px;border:2px solid #5a5a5a;background:#fff;"></div>
<div style="position:absolute;left:425.2px;top:609.9px;width:27.6px;height:27.6px;border:2px solid #5a5a5a;background:#fff;"><svg width="24" height="24" style="position:absolute;left:0;top:0"><path d="M2 11.2 L8.3 17.8 L21.5 4.6" fill="none" stroke="#222" stroke-width="4"/></svg></div>
<div style="position:absolute;left:576.2px;top:609.9px;width:27.6px;height:27.6px;border:2px solid #5a5a5a;background:#fff;"></div>
<div style="position:absolute;left:726.2px;top:609.9px;width:27.6px;height:27.6px;border:2px solid #5a5a5a;background:#fff;"></div>
<div style="position:absolute;left:876.2px;top:609.9px;width:27.6px;height:27.6px;border:2px solid #5a5a5a;background:#fff;"></div>
<div style="position:absolute;left:1026.2px;top:609.9px;width:27.6px;height:27.6px;border:2px solid #5a5a5a;background:#fff;"></div>
<div style="position:absolute;left:1176.2px;top:609.9px;width:27.6px;height:27.6px;border:2px solid #5a5a5a;background:#fff;"></div>
<div style="position:absolute;left:1326.2px;top:609.9px;width:27.6px;height:27.6px;border:2px solid #5a5a5a;background:#fff;"></div>
<div style="position:absolute;left:1476.2px;top:609.9px;width:27.6px;height:27.6px;border:2px solid #5a5a5a;background:#fff;"></div>
<div style="position:absolute;left:1626.2px;top:609.9px;width:27.6px;height:27.6px;border:2px solid #5a5a5a;background:#fff;"></div>
<div style="position:absolute;left:1776.2px;top:609.9px;width:27.6px;height:27.6px;border:2px solid #5a5a5a;background:#fff;"></div>
<div style="position:absolute;left:1926.2px;top:609.9px;width:27.6px;height:27.6px;border:2px solid #5a5a5a;background:#fff;"></div>
<div style="position:absolute;left:2076.2px;top:609.9px;width:27.6px;height:27.6px;border:2px solid #5a5a5a;background:#fff;"></div>
<div style="position:absolute;left:425.2px;top:656.5px;width:27.6px;height:27.6px;border:2px solid #5a5a5a;background:#fff;"></div>
<div style="position:absolute;left:576.2px;top:656.5px;width:27.6px;height:27.6px;border:2px solid #5a5a5a;background:#fff;"></div>
<div style="position:absolute;left:726.2px;top:656.5px;width:27.6px;height:27.6px;border:2px solid #5a5a5a;background:#fff;"></div>
<div style="position:absolute;left:876.2px;top:656.5px;width:27.6px;height:27.6px;border:2px solid #5a5a5a;background:#fff;"></div>
<div style="position:absolute;left:1026.2px;top:656.5px;width:27.6px;height:27.6px;border:2px solid #5a5a5a;background:#fff;"></div>
<div style="position:absolute;left:1176.2px;top:656.5px;width:27.6px;height:27.6px;border:2px solid #5a5a5a;background:#fff;"></div>
<div style="position:absolute;left:1326.2px;top:656.5px;width:27.6px;height:27.6px;border:2px solid #5a5a5a;background:#fff;"><svg width="24" height="24" style="position:absolute;left:0;top:0"><path d="M2 11.2 L8.3 17.8 L21.5 4.6" fill="none" stroke="#222" stroke-width="4"/></svg></div>
<div style="position:absolute;left:1476.2px;top:656.5px;width:27.6px;height:27.6px;border:2px solid #5a5a5a;background:#fff;"></div>
<div style="position:absolute;left:1626.2px;top:656.5px;width:27.6px;height:27.6px;border:2px solid #5a5a5a;background:#fff;"></div>
<div style="position:absolute;left:1776.2px;top:656.5px;width:27.6px;height:27.6px;border:2px solid #5a5a5a;background:#fff;"></div>
<div style="position:absolute;left:1926.2px;top:656.5px;width:27.6px;height:27.6px;border:2px solid #5a5a5a;background:#fff;"></div>
<div style="position:absolute;left:2076.2px;top:656.5px;width:27.6px;height:27.6px;border:2px solid #5a5a5a;background:#fff;"></div>
<div style="position:absolute;left:425.2px;top:703.0px;width:27.6px;height:27.6px;border:2px solid #5a5a5a;background:#fff;"></div>
<div style="position:absolute;left:576.2px;top:703.0px;width:27.6px;height:27.6px;border:2px solid #5a5a5a;background:#fff;"></div>
<div style="position:absolute;left:726.2px;top:703.0px;width:27.6px;height:27.6px;border:2px solid #5a5a5a;background:#fff;"></div>
<div style="position:absolute;left:876.2px;top:703.0px;width:27.6px;height:27.6px;border:2px solid #5a5a5a;background:#fff;"></div>
<div style="position:absolute;left:1026.2px;top:703.0px;width:27.6px;height:27.6px;border:2px solid #5a5a5a;background:#fff;"><svg width="24" height="24" style="position:absolute;left:0;top:0"><path d="M2 11.2 L8.3 17.8 L21.5 4.6" fill="none" stroke="#222" stroke-width="4"/></svg></div>
<div style="position:absolute;left:1176.2px;top:703.0px;width:27.6px;height:27.6px;border:2px solid #5a5a5a;background:#fff;"></div>
<div style="position:absolute;left:1326.2px;top:703.0px;width:27.6px;height:27.6px;border:2px solid #5a5a5a;background:#fff;"></div>
<div style="position:absolute;left:1476.2px;top:703.0px;width:27.6px;height:27.6px;border:2px solid #5a5a5a;background:#fff;"></div>
<div style="position:absolute;left:1626.2px;top:703.0px;width:27.6px;height:27.6px;border:2px solid #5a5a5a;background:#fff;"></div>
<div style="position:absolute;left:1776.2px;top:703.0px;width:27.6px;height:27.6px;border:2px solid #5a5a5a;background:#fff;"></div>
<div style="position:absolute;left:1926.2px;top:703.0px;width:27.6px;height:27.6px;border:2px solid #5a5a5a;background:#fff;"></div>
<div style="position:absolute;left:2076.2px;top:703.0px;width:27.6px;height:27.6px;border:2px solid #5a5a5a;background:#fff;"></div>
<div style="position:absolute;left:425.2px;top:749.6px;width:27.6px;height:27.6px;border:2px solid #5a5a5a;background:#fff;"></div>
<div style="position:absolute;left:576.2px;top:749.6px;width:27.6px;height:27.6px;border:2px solid #5a5a5a;background:#fff;"></div>
<div style="position:absolute;left:726.2px;top:749.6px;width:27.6px;height:27.6px;border:2px solid #5a5a5a;background:#fff;"></div>
<div style="position:absolute;left:876.2px;top:749.6px;width:27.6px;height:27.6px;border:2px solid #5a5a5a;background:#fff;"></div>
<div style="position:absolute;left:1026.2px;top:749.6px;width:27.6px;height:27.6px;border:2px solid #5a5a5a;background:#fff;"></div>
<div style="position:absolute;left:1176.2px;top:749.6px;width:27.6px;height:27.6px;border:2px solid #5a5a5a;background:#fff;"></div>
<div style="position:absolute;left:1326.2px;top:749.6px;width:27.6px;height:27.6px;border:2px solid #5a5a5a;background:#fff;"></div>
<div style="position:absolute;left:1476.2px;top:749.6px;width:27.6px;height:27.6px;border:2px solid #5a5a5a;background:#fff;"></div>
<div style="position:absolute;left:1626.2px;top:749.6px;width:27.6px;height:27.6px;border:2px solid #5a5a5a;background:#fff;"></div>
<div style="position:absolute;left:1776.2px;top:749.6px;width:27.6px;height:27.6px;border:2px solid #5a5a5a;background:#fff;"></div>
<div style="position:absolute;left:1926.2px;top:749.6px;width:27.6px;height:27.6px;border:2px solid #5a5a5a;background:#fff;"></div>
<div style="position:absolute;left:2076.2px;top:749.6px;width:27.6px;height:27.6px;border:2px solid #5a5a5a;background:#fff;"></div>
<div style="position:absolute;left:425.2px;top:796.1px;width:27.6px;height:27.6px;border:2px solid #5a5a5a;background:#fff;"></div>
<div style="position:absolute;left:576.2px;top:796.1px;width:27.6px;height:27.6px;border:2px solid #5a5a5a;background:#fff;"></div>
<div style="position:absolute;left:726.2px;top:796.1px;width:27.6px;height:27.6px;border:2px solid #5a5a5a;background:#fff;"></div>
<div style="position:absolute;left:876.2px;top:796.1px;width:27.6px;height:27.6px;border:2px solid #5a5a5a;background:#fff;"></div>
<div style="position:absolute;left:1026.2px;top:796.1px;width:27.6px;height:27.6px;border:2px solid #5a5a5a;background:#fff;"><svg width="24" height="24" style="position:absolute;left:0;top:0"><path d="M2 11.2 L8.3 17.8 L21.5 4.6" fill="none" stroke="#222" stroke-width="4"/></svg></div>
<div style="position:absolute;left:1176.2px;top:796.1px;width:27.6px;height:27.6px;border:2px solid #5a5a5a;background:#fff;"></div>
<div style="position:absolute;left:1326.2px;top:796.1px;width:27.6px;height:27.6px;border:2px solid #5a5a5a;background:#fff;"></div>
<div style="position:absolute;left:1476.2px;top:796.1px;width:27.6px;height:27.6px;border:2px solid #5a5a5a;background:#fff;"></div>
<div style="position:absolute;left:1626.2px;top:796.1px;width:27.6px;height:27.6px;border:2px solid #5a5a5a;background:#fff;"></div>
<div style="position:absolute;left:1776.2px;top:796.1px;width:27.6px;height:27.6px;border:2px solid #5a5a5a;background:#fff;"></div>
<div style="position:absolute;left:1926.2px;top:796.1px;width:27.6px;height:27.6px;border:2px solid #5a5a5a;background:#fff;"></div>
<div style="position:absolute;left:2076.2px;top:796.1px;width:27.6px;height:27.6px;border:2px solid #5a5a5a;background:#fff;"></div>
<div style="position:absolute;left:425.2px;top:842.7px;width:27.6px;height:27.6px;border:2px solid #5a5a5a;background:#fff;"></div>
<div style="position:absolute;left:576.2px;top:842.7px;width:27.6px;height:27.6px;border:2px solid #5a5a5a;background:#fff;"></div>
<div style="position:absolute;left:726.2px;top:842.7px;width:27.6px;height:27.6px;border:2px solid #5a5a5a;background:#fff;"></div>
<div style="position:absolute;left:876.2px;top:842.7px;width:27.6px;height:27.6px;border:2px solid #5a5a5a;background:#fff;"></div>
<div style="position:absolute;left:1026.2px;top:842.7px;width:27.6px;height:27.6px;border:2px solid #5a5a5a;background:#fff;"><svg width="24" height="24" style="position:absolute;left:0;top:0"><path d="M2 11.2 L8.3 17.8 L21.5 4.6" fill="none" stroke="#222" stroke-width="4"/></svg></div>
<div style="position:absolute;left:1176.2px;top:842.7px;width:27.6px;height:27.6px;border:2px solid #5a5a5a;background:#fff;"></div>
<div style="position:absolute;left:1326.2px;top:842.7px;width:27.6px;height:27.6px;border:2px solid #5a5a5a;background:#fff;"></div>
<div style="position:absolute;left:1476.2px;top:842.7px;width:27.6px;height:27.6px;border:2px solid #5a5a5a;background:#fff;"></div>
<div style="position:absolute;left:1626.2px;top:842.7px;width:27.6px;height:27.6px;border:2px solid #5a5a5a;background:#fff;"></div>
<div style="position:absolute;left:1776.2px;top:842.7px;width:27.6px;height:27.6px;border:2px solid #5a5a5a;background:#fff;"></div>
<div style="position:absolute;left:1926.2px;top:842.7px;width:27.6px;height:27.6px;border:2px solid #5a5a5a;background:#fff;"></div>
<div style="position:absolute;left:2076.2px;top:842.7px;width:27.6px;height:27.6px;border:2px solid #5a5a5a;background:#fff;"></div>
<div style="position:absolute;left:425.2px;top:889.3px;width:27.6px;height:27.6px;border:2px solid #5a5a5a;background:#fff;"></div>
<div style="position:absolute;left:576.2px;top:889.3px;width:27.6px;height:27.6px;border:2px solid #5a5a5a;background:#fff;"></div>
<div style="position:absolute;left:726.2px;top:889.3px;width:27.6px;height:27.6px;border:2px solid #5a5a5a;background:#fff;"></div>
<div style="position:absolute;left:876.2px;top:889.3px;width:27.6px;height:27.6px;border:2px solid #5a5a5a;background:#fff;"></div>
<div style="position:absolute;left:1026.2px;top:889.3px;width:27.6px;height:27.6px;border:2px solid #5a5a5a;background:#fff;"></div>
<div style="position:absolute;left:1176.2px;top:889.3px;width:27.6px;height:27.6px;border:2px solid #5a5a5a;background:#fff;"></div>
<div style="position:absolute;left:1326.2px;top:889.3px;width:27.6px;height:27.6px;border:2px solid #5a5a5a;background:#fff;"><svg width="24" height="24" style="position:absolute;left:0;top:0"><path d="M2 11.2 L8.3 17.8 L21.5 4.6" fill="none" stroke="#222" stroke-width="4"/></svg></div>
<div style="position:absolute;left:1476.2px;top:889.3px;width:27.6px;height:27.6px;border:2px solid #5a5a5a;background:#fff;"></div>
<div style="position:absolute;left:1626.2px;top:889.3px;width:27.6px;height:27.6px;border:2px solid #5a5a5a;background:#fff;"></div>
<div style="position:absolute;left:1776.2px;top:889.3px;width:27.6px;height:27.6px;border:2px solid #5a5a5a;background:#fff;"></div>
<div style="position:absolute;left:1926.2px;top:889.3px;width:27.6px;height:27.6px;border:2px solid #5a5a5a;background:#fff;"></div>
<div style="position:absolute;left:2076.2px;top:889.3px;width:27.6px;height:27.6px;border:2px solid #5a5a5a;background:#fff;"></div>
<div style="position:absolute;left:425.2px;top:935.8px;width:27.6px;height:27.6px;border:2px solid #5a5a5a;background:#fff;"></div>
<div style="position:absolute;left:576.2px;top:935.8px;width:27.6px;height:27.6px;border:2px solid #5a5a5a;background:#fff;"></div>
<div style="position:absolute;left:726.2px;top:935.8px;width:27.6px;height:27.6px;border:2px solid #5a5a5a;background:#fff;"></div>
<div style="position:absolute;left:876.2px;top:935.8px;width:27.6px;height:27.6px;border:2px solid #5a5a5a;background:#fff;"></div>
<div style="position:absolute;left:1026.2px;top:935.8px;width:27.6px;height:27.6px;border:2px solid #5a5a5a;background:#fff;"></div>
<div style="position:absolute;left:1176.2px;top:935.8px;width:27.6px;height:27.6px;border:2px solid #5a5a5a;background:#fff;"><svg width="24" height="24" style="position:absolute;left:0;top:0"><path d="M2 11.2 L8.3 17.8 L21.5 4.6" fill="none" stroke="#222" stroke-width="4"/></svg></div>
<div style="position:absolute;left:1326.2px;top:935.8px;width:27.6px;height:27.6px;border:2px solid #5a5a5a;background:#fff;"></div>
<div style="position:absolute;left:1476.2px;top:935.8px;width:27.6px;height:27.6px;border:2px solid #5a5a5a;background:#fff;"></div>
<div style="position:absolute;left:1626.2px;top:935.8px;width:27.6px;height:27.6px;border:2px solid #5a5a5a;background:#fff;"></div>
<div style="position:absolute;left:1776.2px;top:935.8px;width:27.6px;height:27.6px;border:2px solid #5a5a5a;background:#fff;"></div>
<div style="position:absolute;left:1926.2px;top:935.8px;width:27.6px;height:27.6px;border:2px solid #5a5a5a;background:#fff;"></div>
<div style="position:absolute;left:2076.2px;top:935.8px;width:27.6px;height:27.6px;border:2px solid #5a5a5a;background:#fff;"></div>
</div>
</div>
<div style="position:absolute;left:2952px;top:1728px;width:120px;height:211.5px;border:8px solid rgba(0,0,0,0.9);border-radius:9px;background:rgba(255,255,255,0.93);background-clip:padding-box;box-shadow:0 0 50px 8px rgba(0,0,0,0.18);"></div>
</div></body></html>
